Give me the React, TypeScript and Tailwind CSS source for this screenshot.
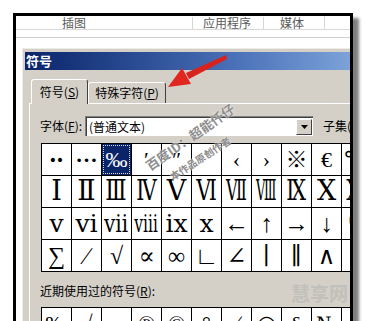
const ui = "font-['Noto_Sans_CJK_SC','Noto_Sans',sans-serif]";
const sym = "font-['Liberation_Serif','DejaVu_Serif','Noto_Sans_CJK_SC',serif]";

const ROWS: { size: string; chars: string[] }[] = [
  { size: "text-[22px]", chars: ["‥", "…", "‰", "′", "″", "‵", "‹", "›", "※", "€", "℃"] },
  { size: "text-[27px]", chars: ["Ⅰ", "Ⅱ", "Ⅲ", "Ⅳ", "Ⅴ", "Ⅵ", "Ⅶ", "Ⅷ", "Ⅸ", "Ⅹ", "Ⅺ"] },
  { size: "text-[25px]", chars: ["ⅴ", "ⅵ", "ⅶ", "ⅷ", "ⅸ", "ⅹ", "←", "↑", "→", "↓", "↖"] },
  { size: "text-[24px]", chars: ["∑", "∕", "√", "∝", "∞", "∟", "∠", "∣", "∥", "∧", "∨"] },
];

// narrow glyphs so the wide numerals fit a 30px cell, like the dialog's font
const FIT: Record<string, string> = {
  "Ⅲ": "scale-x-[0.82]",
  "Ⅳ": "scale-x-[0.76]",
  "Ⅵ": "scale-x-[0.76]",
  "Ⅶ": "scale-x-[0.6]",
  "Ⅷ": "scale-x-[0.48]",
  "Ⅸ": "scale-x-[0.76]",
  "Ⅺ": "scale-x-[0.76]",
  "ⅶ": "scale-x-[0.8]",
  "ⅷ": "scale-x-[0.62]",
  "‥": "-translate-y-[5px] font-bold",
  "…": "-translate-y-[5px] font-bold",
};

const RECENT = ["‰", "√", "…", "®", "©", "°", "∕", "◎", "§", "№", "☆"];

function Cell({ ch, size, selected }: { ch: string; size: string; selected?: boolean }) {
  return (
    <div
      className={`relative flex h-[32px] items-center justify-center overflow-hidden border-r border-b border-black ${sym} ${size} leading-none ${
        selected ? "bg-[#0a246a] text-white" : "bg-white text-black"
      }`}
    >
      {selected && <span className="absolute inset-[1px] border border-dotted border-[#d8d8d8]" />}
      <span className={`relative inline-block ${FIT[ch] ?? ""}`}>{ch}</span>
    </div>
  );
}

export default function App() {
  return (
    <div className={`h-[321px] w-[367px] overflow-hidden bg-white pl-[13px] pt-[13px] ${ui}`}>
      <div className="relative h-[340px] w-[340px] overflow-hidden border-[3px] border-b-0 border-black shadow-[6px_5px_3px_rgba(0,0,0,0.5)]">
        {/* ribbon strip behind the dialog */}
        <div className="h-[32px] bg-white">
          <div className="flex h-[13px] items-end text-[12px] leading-[12px] text-[#5a5a5a]">
            <div className="w-[176px] pl-[46px]">插图</div>
            <div className="w-[71px] border-l border-[#d6d6d6] pl-[10px]">应用程序</div>
            <div className="w-[61px] border-l border-[#d6d6d6] pl-[16px]">媒体</div>
            <div className="h-full flex-1 border-l border-[#d6d6d6]" />
          </div>
          <div className="h-[8px] border-t border-[#d8d8d8]" />
          <div className="border-t border-[#cfcfcf]" />
        </div>

        {/* symbol dialog */}
        <div className="pl-[6px]">
          <div className="w-[420px] border-l border-t border-[#eeece6] bg-[#d4d0c8] pl-[2px] pt-[3px]">
            <div className="flex h-[18px] items-center bg-gradient-to-r from-[#0a246a] via-[#4a70b8] to-[#a6caf0] pl-[1px] text-[13px] font-bold text-white">
              符号
            </div>

            <div className="pl-[4px] pt-[9px]">
              <div className="flex items-end text-[12px] leading-none text-black">
                <div className="relative z-10 -mb-px ml-[2px] flex h-[25px] w-[57px] items-center justify-center rounded-t-[3px] border-l border-t border-r border-l-white border-t-white border-r-[#404040] bg-[#d4d0c8]">
                  符号(<span className="underline">S</span>)
                </div>
                <div className="flex h-[21px] w-[78px] items-center justify-center rounded-t-[3px] border-l border-t border-r border-l-white border-t-white border-r-[#404040] bg-[#d4d0c8]">
                  特殊字符(<span className="underline">P</span>)
                </div>
              </div>

              <div className="h-[240px] border-l border-t border-white pl-[10px] pt-[12px]">
                <div className="flex h-[20px] items-center text-[12px] text-black">
                  <div className="w-[45px]">
                    字体(<span className="underline">F</span>):
                  </div>
                  <div className="flex h-[20px] w-[228px] items-center border-t border-l border-[#808080] border-b-white border-r-white bg-white">
                    <div className="flex h-full flex-1 items-center border-t border-l border-[#404040] border-b-[#d4d0c8] border-r-[#d4d0c8] pl-[2px]">
                      <span className="flex-1">(普通文本)</span>
                      <div className="mr-[1px] flex h-[16px] w-[16px] items-center justify-center border border-l-white border-t-white border-r-[#404040] border-b-[#404040] bg-[#d4d0c8]">
                        <svg width="7" height="4" viewBox="0 0 7 4">
                          <path d="M0 0h7L3.5 4z" fill="#000" />
                        </svg>
                      </div>
                    </div>
                  </div>
                  <div className="ml-[10px] whitespace-nowrap">子集(U):</div>
                </div>

                <div className="ml-[1px] mt-[7px] grid w-max grid-cols-[repeat(11,30px)] border-l border-t border-black">
                  {ROWS.map((row, r) =>
                    row.chars.map((ch, c) => (
                      <Cell key={`${r}-${c}`} ch={ch} size={row.size} selected={r === 0 && c === 2} />
                    ))
                  )}
                </div>

                <div className="mt-[13px] text-[12px] leading-none text-black">
                  近期使用过的符号(<span className="underline">R</span>):
                </div>

                <div className="ml-[1px] mt-[10px] grid w-max grid-cols-[repeat(11,30px)] border-l border-t border-black">
                  {RECENT.map((ch, i) => (
                    <Cell key={i} ch={ch} size="text-[22px]" />
                  ))}
                </div>
              </div>
            </div>
          </div>
        </div>

        {/* red arrow */}
        <svg className="pointer-events-none absolute left-0 top-0" width="334" height="100" viewBox="0 0 334 100">
          <polygon points="210,39 211,43 173,63 170,57" fill="#d9221c" />
          <polygon points="152,71 166,52 175,68" fill="#e0261f" />
        </svg>

        {/* watermarks */}
        <div className="pointer-events-none absolute left-[174px] top-[121px] -translate-x-1/2 -translate-y-1/2 -rotate-[35deg] whitespace-nowrap text-[13px] font-bold text-[#8e8e8e] [text-shadow:0_0_2px_#fff]">
          百度ID：超能仟仔
        </div>
        <div className="pointer-events-none absolute left-[184px] top-[142px] -translate-x-1/2 -translate-y-1/2 -rotate-[33deg] whitespace-nowrap text-[10px] font-bold text-[#8e8e8e] [text-shadow:0_0_2px_#fff]">
          本作品原创作者
        </div>
        <div className="pointer-events-none absolute left-[275px] top-[263px] text-[19px] font-bold text-[#c2c0ba]">
          慧享网
        </div>
      </div>
    </div>
  );
}
